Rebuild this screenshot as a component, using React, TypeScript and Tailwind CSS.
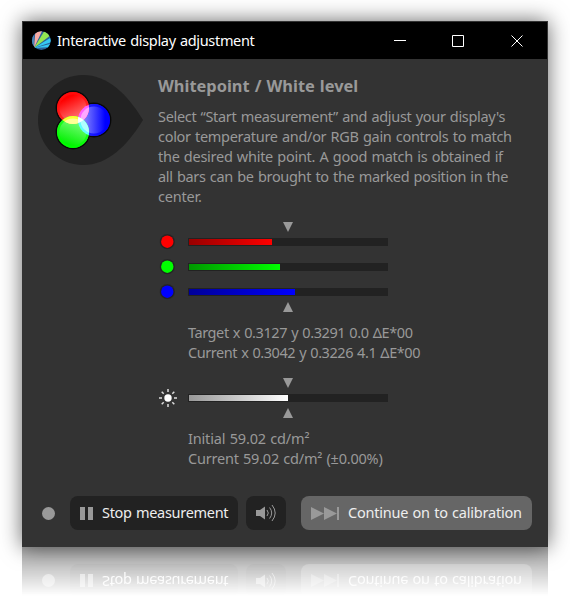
import React from "react";

const ui = "font-['Noto_Sans','Open_Sans',sans-serif] whitespace-nowrap [word-spacing:0.8px]";

function Line({ className = "", children }: { className?: string; children: React.ReactNode }) {
  return (
    <div className="h-5">
      <span className={`${ui} inline-block leading-5 ${className}`}>{children}</span>
    </div>
  );
}

function Marker({ up = false, className = "" }: { up?: boolean; className?: string }) {
  return (
    <svg className={`ml-[95px] block h-[10px] w-[10px] ${className}`} viewBox="0 0 10 10">
      <path d={up ? "M5 0L10 10H0Z" : "M0 0H10L5 10Z"} fill="#999" />
    </svg>
  );
}

function Bar({ fill }: { fill: string }) {
  return (
    <div className="h-2 w-[200px] bg-[#222] py-px pl-px">
      <div className={`h-[6px] bg-linear-to-r ${fill}`} />
    </div>
  );
}

function Lamp({ color }: { color: string }) {
  return (
    <svg className="h-4 w-4" viewBox="0 0 16 16">
      <circle cx="8.3" cy="7.7" r="7.6" fill="#222" opacity="0.7" />
      <circle cx="8.3" cy="7.7" r="6.8" fill="#222" />
      <circle cx="8.3" cy="7.7" r="6.2" fill={color} />
    </svg>
  );
}

function AppLogo() {
  return (
    <svg className="h-5 w-5" viewBox="0 0 20 20">
      <defs>
        <clipPath id="disc"><circle cx="10.3" cy="9.7" r="9.4" /></clipPath>
      </defs>
      <g clipPath="url(#disc)">
        <rect width="20" height="20" fill="#2c6199" />
        <path d="M3 17L-2 6L3 1Z" fill="#4a86b8" />
        <path d="M3 17L4.5 -1L11.5 -1Z" fill="#f7aaa4" />
        <path d="M3 17L14 -1L20 4Z" fill="#92e650" />
        <path d="M3 17L21 6L21 11Z" fill="#35c9f4" />
        <path d="M3 17L21 12.5L21 16Z" fill="#35c9f4" />
      </g>
    </svg>
  );
}

function RgbEmblem() {
  return (
    <svg className="block h-[92px] w-[108px]" viewBox="37 74 108 92">
      <defs>
        <linearGradient id="r" x1="0.2" y1="0" x2="0.7" y2="1">
          <stop offset="0.2" stopColor="#ff0000" />
          <stop offset="1" stopColor="#ff9090" />
        </linearGradient>
        <linearGradient id="g" x1="0.3" y1="1" x2="0.7" y2="0">
          <stop offset="0.1" stopColor="#00f000" />
          <stop offset="1" stopColor="#90ff90" />
        </linearGradient>
        <linearGradient id="b" x1="1" y1="0.5" x2="0" y2="0.5">
          <stop offset="0.15" stopColor="#0000ff" />
          <stop offset="1" stopColor="#a8a8ff" />
        </linearGradient>
        <clipPath id="cr"><circle cx="73" cy="108" r="16" /></clipPath>
        <clipPath id="cg"><circle cx="73" cy="132" r="16" /></clipPath>
      </defs>
      <path d="M83 75C108 75 127 94 143 120C127 146 108 165 83 165C58 165 38 145 38 120C38 95 58 75 83 75Z" fill="#222" />
      <g fill="#080808">
        <circle cx="73" cy="108" r="17.4" />
        <circle cx="73" cy="132" r="17.4" />
        <circle cx="94" cy="120" r="17.4" />
      </g>
      <circle cx="94" cy="120" r="16" fill="url(#b)" />
      <circle cx="94" cy="120" r="14.8" fill="none" stroke="#0000ff" strokeWidth="2.4" opacity="0.7" />
      <circle cx="73" cy="108" r="16" fill="url(#r)" />
      <circle cx="73" cy="108" r="14.8" fill="none" stroke="#ff1010" strokeWidth="2.4" opacity="0.7" />
      <circle cx="73" cy="132" r="16" fill="url(#g)" />
      <circle cx="73" cy="132" r="14.8" fill="none" stroke="#00ff00" strokeWidth="2.4" opacity="0.7" />
      <g clipPath="url(#cr)">
        <circle cx="94" cy="120" r="16" fill="#ff60ff" />
        <circle cx="94" cy="120" r="13.6" fill="#ffa8ff" />
        <circle cx="73" cy="132" r="16" fill="#ffff30" />
        <circle cx="73" cy="132" r="13.6" fill="#ffff98" />
      </g>
      <g clipPath="url(#cg)">
        <circle cx="94" cy="120" r="16" fill="#60ffff" />
        <circle cx="94" cy="120" r="13.6" fill="#b0ffff" />
        <g clipPath="url(#cr)">
          <circle cx="94" cy="120" r="16" fill="#ffffff" />
        </g>
      </g>
    </svg>
  );
}

function Sun() {
  return (
    <svg className="h-[18px] w-[18px]" viewBox="0 0 18 18">
      <circle cx="9" cy="9" r="3.7" fill="#fff" />
      <path d="M9 0V3M9 15V18M0 9H3M15 9H18M2.7 2.7L4.7 4.7M13.3 13.3L15.3 15.3M2.7 15.3L4.7 13.3M13.3 4.7L15.3 2.7" stroke="#ddd" strokeWidth="1.5" />
    </svg>
  );
}

function Footer() {
  return (
    <div className="flex h-[68px] items-start bg-[#333] pt-[17px] pl-5">
      <div className="mt-[11px] h-[13px] w-[13px] rounded-full bg-[#999]" />
      <div className="ml-[15px] flex h-[34px] w-[168px] items-center rounded-lg bg-[#222] pl-[10px]">
        <div className="flex gap-[3px]">
          <div className="h-[13px] w-[5px] bg-[#999]" />
          <div className="h-[13px] w-[5px] bg-[#999]" />
        </div>
        <span className={`${ui} ml-[9px] text-[14.5px] tracking-[-0.3px] text-[#eee]`}>Stop measurement</span>
      </div>
      <div className="ml-2 flex h-[34px] w-10 items-center rounded-lg bg-[#222] pl-[10px]">
        <svg className="h-[18px] w-[20px]" viewBox="0 0 20 18">
          <path d="M0 6H4L9 2.5V15.5L4 12H0Z" fill="#999" />
          <path d="M11 6Q13.6 9 11 12M13.6 3.5Q17.8 9 13.6 14.5M16 1Q22.4 9 16 17" fill="none" stroke="#999" strokeWidth="1" />
        </svg>
      </div>
      <div className="ml-[15px] flex h-[34px] w-[231px] items-center rounded-lg bg-[#666] pl-[10px]">
        <svg className="h-[13px] w-[28px]" viewBox="0 0 28 13">
          <path d="M0 0L13 6.5L0 13ZM13 0L26 6.5L13 13ZM26 0H28V13H26Z" fill="#999" />
        </svg>
        <span className={`${ui} ml-[9px] text-[14.5px] tracking-[-0.22px] text-[#eee]`}>Continue on to calibration</span>
      </div>
    </div>
  );
}

export default function App() {
  return (
    <div className="h-[598px] w-[570px] overflow-hidden bg-white pt-[21px] pl-[22px]">
      <div className="h-[526px] w-[526px] bg-[#333] shadow-[0_0_20px_rgba(0,0,0,0.6)]">
        <div className="flex h-[38px] items-center border border-b-0 border-[#333] bg-black pl-[8px] text-white">
          <AppLogo />
          <span className={`${ui} ml-[6px] text-[14.5px] tracking-[-0.33px]`}>Interactive display adjustment</span>
          <svg className="ml-auto mr-[23px] h-[14px] w-[132px]" viewBox="0 0 132 14" fill="none" stroke="#fff">
            <path d="M2 6.5H14" />
            <path d="M60.5 1.5H71.5V12.5H60.5Z" />
            <path d="M119.5 1.5L130.5 12.5M130.5 1.5L119.5 12.5" />
          </svg>
        </div>
        <div className="flex h-[420px] text-[#999]">
          <div className="w-[136px] pt-[15px] pl-[15px]">
            <RgbEmblem />
          </div>
          <div className="pt-[17px] text-[14.5px]">
            <Line className="text-[16.4px] font-bold">Whitepoint / White level</Line>
            <div className="mt-[10px]">
              <Line className="tracking-[-0.32px]">Select “Start measurement” and adjust your display's</Line>
              <Line className="tracking-[-0.3px]">color temperature and/or RGB gain controls to match</Line>
              <Line className="tracking-[-0.27px]">the desired white point. A good match is obtained if</Line>
              <Line className="tracking-[-0.32px]">all bars can be brought to the marked position in the</Line>
              <Line className="tracking-[-0.2px]">center.</Line>
            </div>
            <div className="flex pt-[16px]">
              <div className="flex w-[30px] flex-col gap-[9px] pt-[12px] pl-px">
                <Lamp color="#f00" />
                <Lamp color="#0f0" />
                <Lamp color="#00f" />
              </div>
              <div className="w-[240px]">
                <Marker />
                <div className="mt-[6px] flex flex-col gap-[17px]">
                  <Bar fill="w-[83px] from-[#900] to-[#f00]" />
                  <Bar fill="w-[91px] from-[#090] to-[#0f0]" />
                  <Bar fill="w-[106px] from-[#009] to-[#00f]" />
                </div>
                <Marker up className="mt-[6px]" />
                <div className="mt-[10px]">
                  <Line className="tracking-[-0.42px]">Target x 0.3127 y 0.3291 0.0 ΔE*00</Line>
                  <Line className="tracking-[-0.45px]">Current x 0.3042 y 0.3226 4.1 ΔE*00</Line>
                </div>
              </div>
            </div>
            <div className="flex pt-[16px]">
              <div className="w-[30px] pt-[11px] pl-px">
                <Sun />
              </div>
              <div>
                <Marker />
                <div className="mt-[6px]">
                  <Bar fill="w-[99px] from-[#999] to-white" />
                </div>
                <Marker up className="mt-[6px]" />
                <div className="mt-[10px]">
                  <Line className="tracking-[-0.17px]">Initial 59.02 cd/m²</Line>
                  <Line className="tracking-[-0.22px]">Current 59.02 cd/m² (±0.00%)</Line>
                </div>
              </div>
            </div>
          </div>
        </div>
        <Footer />
      </div>
      <div className="h-[51px] w-[526px] overflow-hidden mask-[linear-gradient(to_bottom,rgba(0,0,0,0.45),rgba(0,0,0,0.22)_50%,transparent_96%)]" aria-hidden="true">
        <div className="-scale-y-100">
          <Footer />
        </div>
      </div>
    </div>
  );
}
